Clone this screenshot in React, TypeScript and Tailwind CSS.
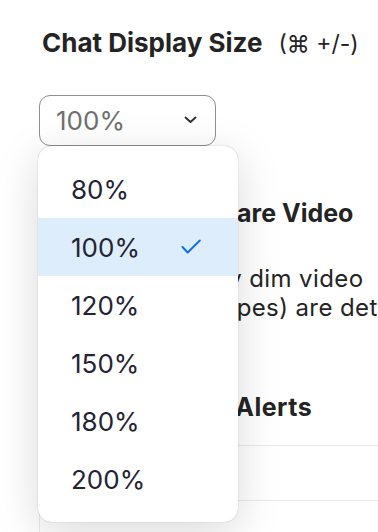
import React from 'react'

const sizes = ['80%', '100%', '120%', '150%', '180%', '200%']

export default function App() {
  const selected = '100%'

  return (
    <div className="relative w-[378px] h-[532px] overflow-hidden bg-white font-['Inter','Noto_Sans',sans-serif] text-[#232333]">
      <div className="pl-[42px] pt-[27px]">
        <div className="flex items-baseline whitespace-nowrap">
          <h2 className="text-[26px] leading-[32px] font-bold text-[#242424]">Chat Display Size</h2>
          <span className="ml-4 text-[23px] text-[#242424]">(⌘ +/-)</span>
        </div>

        {/* select trigger */}
        <div className="mt-[33px] -ml-[3px] flex h-[51px] w-[177px] items-center justify-between rounded-[11px] border-[1.5px] border-[#8e8e93] pl-[16px] pr-[18px]">
          <span className="text-[26px] text-[#707070]">100%</span>
          <svg width="13" height="8" viewBox="0 0 13 8" fill="none">
            <path d="M1.5 1.5 6.5 6 11.5 1.5" stroke="#2d2d3a" strokeWidth="1.8" strokeLinecap="round" strokeLinejoin="round" />
          </svg>
        </div>

        <h3 className="mt-[52px] whitespace-nowrap text-[25px] leading-[30px] font-bold text-[#242424]">
          Dim Flashing Share Video
        </h3>
        <p className="mt-[36px] whitespace-nowrap text-[24px] leading-[29px] tracking-[0.4px] text-[#242424]">
          <span className="block">We automatically dim video</span>
          <span className="block">lights (seizure types) are detected</span>
        </p>

        <h3 className="mt-[70px] whitespace-nowrap text-[25px] leading-[30px] tracking-[0.5px] font-bold text-[#242424]">
          Reduce Flicker Alerts
        </h3>
      </div>

      {/* list box under the menu */}
      <div className="ml-[39px] mt-[23px] border-l border-t border-[#e9e9ef]">
        <div className="h-[55px] border-b border-[#e9e9ef]" />
        <div className="h-[55px]" />
      </div>

      {/* dropdown menu */}
      <div className="absolute left-[38px] top-[146px] w-[200px] rounded-[14px] bg-white py-[14px] shadow-[0_10px_44px_rgba(0,0,0,0.15),0_0_1px_rgba(0,0,0,0.35)]">
        {sizes.map((s) => (
          <div
            key={s}
            className={`relative flex h-[58px] items-center pl-[33px] text-[26px] text-[#232333] ${s === selected ? 'bg-[#deedfc]' : ''}`}
          >
            {s}
            {s === selected && (
              <svg className="absolute left-[143px] top-[21px]" width="20" height="16" viewBox="0 0 20 16" fill="none">
                <path d="M1.5 8 6.7 13.5 18.8 1.5" stroke="#0e71eb" strokeWidth="2" strokeLinecap="round" strokeLinejoin="round" />
              </svg>
            )}
          </div>
        ))}
      </div>
    </div>
  )
}
